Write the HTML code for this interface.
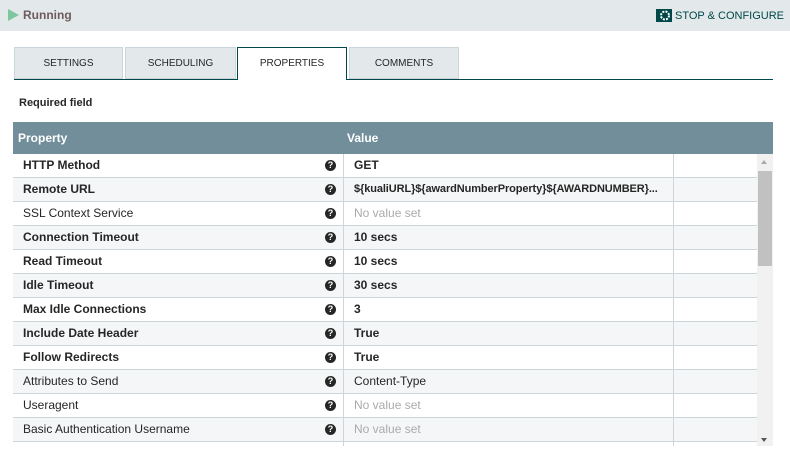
<!DOCTYPE html>
<html><head><style>
*{margin:0;padding:0;box-sizing:border-box}
body{width:790px;height:465px;background:#fff;font-family:"Liberation Sans",sans-serif;position:relative;overflow:hidden;color:#262626}
.top{position:absolute;left:0;top:0;width:790px;height:31px;background:#e3e8eb}
.run{position:absolute;left:23px;top:8px;font-size:12px;font-weight:bold;color:#6e5b5b}
.tri{position:absolute;left:8px;top:9px;width:0;height:0;border-left:11px solid #7dc7a0;border-top:6px solid transparent;border-bottom:6px solid transparent}
.stop{position:absolute;right:6px;top:9px;font-size:11px;color:#004849}
.tab{position:absolute;top:47px;height:32px;background:#e3e8eb;border:1px solid #ccd5d9;font-size:10px;color:#262626;text-align:center;line-height:31px}
.tab.act{background:#fff;border:1px solid #004849;border-bottom:none;height:33px;z-index:2}
.line{position:absolute;left:14px;top:79px;width:759px;height:1px;background:#004849}
.req{position:absolute;left:19px;top:97px;font-size:11px;font-weight:bold}
.hdr{position:absolute;left:13px;top:122px;width:760px;height:32px;background:#728e9b;color:#fff;font-weight:bold;font-size:12px}
.row{position:absolute;left:13px;width:744px;height:24px;border-bottom:1px solid #ccd5d9;font-size:12px;line-height:23px}
.row .n{position:absolute;left:10px}
.row .v{position:absolute;left:341px;white-space:nowrap}
.row .d1{position:absolute;left:330px;top:0;bottom:0;width:1px;background:#ccd5d9}
.row .d2{position:absolute;left:660px;top:0;bottom:0;width:1px;background:#ccd5d9}
.q{position:absolute;left:312px;top:6px;width:11px;height:11px;border-radius:50%;background:#262626;color:#fff;font-size:9px;font-weight:bold;line-height:11px;text-align:center}
.b{font-weight:bold}
.g{color:#aaa}
.sb{position:absolute;left:757px;top:154px;width:16px;height:292px;background:#f1f1f1}
.th{position:absolute;left:758px;top:171px;width:14px;height:95px;background:#c1c1c1}
</style></head><body>
<div class="top"><div class="tri"></div><div class="run">Running</div>
<div class="stop"><svg width="16" height="13" style="vertical-align:-3px" viewBox="0 0 16 13"><rect x="0" y="0" width="16" height="13" fill="#004849"/><circle cx="9" cy="6.5" r="4" fill="none" stroke="#fff" stroke-width="2" stroke-dasharray="2 1.2"/><circle cx="9" cy="6.5" r="1.5" fill="#004849"/></svg> STOP &amp; CONFIGURE</div></div>
<div class="tab" style="left:14px;width:109px">SETTINGS</div>
<div class="tab" style="left:125px;width:111px">SCHEDULING</div>
<div class="tab act" style="left:237px;width:110px">PROPERTIES</div>
<div class="tab" style="left:349px;width:110px">COMMENTS</div>
<div class="line"></div>
<div class="req">Required field</div>
<div class="hdr"><span style="position:absolute;left:5px;top:9px">Property</span><span style="position:absolute;left:334px;top:9px">Value</span></div>
<div style="position:absolute;left:13px;top:154px;width:744px;height:292px;overflow:hidden">
<div style="position:relative;left:-13px;top:-154px">
<div class="row" style="top:154px;background:#fff"><span class="n b">HTTP Method</span><span class="q">?</span><span class="d1"></span><span class="v b">GET</span><span class="d2"></span></div>
<div class="row" style="top:178px;background:#f4f6f7"><span class="n b">Remote URL</span><span class="q">?</span><span class="d1"></span><span class="v b" style="font-size:11px;letter-spacing:-0.1px">${kualiURL}${awardNumberProperty}${AWARDNUMBER}...</span><span class="d2"></span></div>
<div class="row" style="top:202px;background:#fff"><span class="n">SSL Context Service</span><span class="q">?</span><span class="d1"></span><span class="v g">No value set</span><span class="d2"></span></div>
<div class="row" style="top:226px;background:#f4f6f7"><span class="n b">Connection Timeout</span><span class="q">?</span><span class="d1"></span><span class="v b">10 secs</span><span class="d2"></span></div>
<div class="row" style="top:250px;background:#fff"><span class="n b">Read Timeout</span><span class="q">?</span><span class="d1"></span><span class="v b">10 secs</span><span class="d2"></span></div>
<div class="row" style="top:274px;background:#f4f6f7"><span class="n b">Idle Timeout</span><span class="q">?</span><span class="d1"></span><span class="v b">30 secs</span><span class="d2"></span></div>
<div class="row" style="top:298px;background:#fff"><span class="n b">Max Idle Connections</span><span class="q">?</span><span class="d1"></span><span class="v b">3</span><span class="d2"></span></div>
<div class="row" style="top:322px;background:#f4f6f7"><span class="n b">Include Date Header</span><span class="q">?</span><span class="d1"></span><span class="v b">True</span><span class="d2"></span></div>
<div class="row" style="top:346px;background:#fff"><span class="n b">Follow Redirects</span><span class="q">?</span><span class="d1"></span><span class="v b">True</span><span class="d2"></span></div>
<div class="row" style="top:370px;background:#f4f6f7"><span class="n">Attributes to Send</span><span class="q">?</span><span class="d1"></span><span class="v">Content-Type</span><span class="d2"></span></div>
<div class="row" style="top:394px;background:#fff"><span class="n">Useragent</span><span class="q">?</span><span class="d1"></span><span class="v g">No value set</span><span class="d2"></span></div>
<div class="row" style="top:418px;background:#f4f6f7"><span class="n">Basic Authentication Username</span><span class="q">?</span><span class="d1"></span><span class="v g">No value set</span><span class="d2"></span></div>
<div class="row" style="top:442px;background:#fff"><span class="n">Basic Authentication Password</span><span class="q">?</span><span class="d1"></span><span class="v g">No value set</span><span class="d2"></span></div>
</div></div>
<div class="sb"></div><div class="th"></div>
<div style="position:absolute;left:761px;top:160px;border-left:3px solid transparent;border-right:3px solid transparent;border-bottom:4px solid #aaa"></div>
<div style="position:absolute;left:761px;top:438px;border-left:3px solid transparent;border-right:3px solid transparent;border-top:4px solid #555"></div>
</body></html>
